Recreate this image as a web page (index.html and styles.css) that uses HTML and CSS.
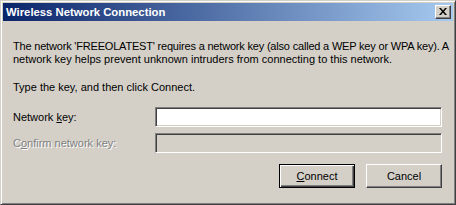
FILE: index.html
```html
<!DOCTYPE html>
<html>
<head>
<meta charset="utf-8">
<link rel="stylesheet" href="styles.css">
</head>
<body>
<div class="window">
  <div class="titlebar">
    <span class="title">Wireless Network Connection</span>
    <span class="close"><svg width="8" height="7" viewBox="0 0 8 7"><path d="M0 0h2l2 2.5 2-2.5h2l-3 3.5 3 3.5h-2l-2-2.5-2 2.5h-2l3-3.5z" fill="#000"/></svg></span>
  </div>
  <div class="content">
    <p class="msg"><span class="tight">The network 'FREEOLATEST' requires a network key (also called a WEP key or WPA key). A</span><br>network key helps prevent unknown intruders from connecting to this network.</p>
    <p class="msg instr">Type the key, and then click Connect.</p>
    <div class="form">
      <label class="lbl">Network <u>k</u>ey:</label>
      <div class="field"></div>
      <label class="lbl disabled">C<u>o</u>nfirm network key:</label>
      <div class="field off"></div>
    </div>
    <div class="actions">
      <button class="btn default"><span><u>C</u>onnect</span></button>
      <button class="btn"><span>Cancel</span></button>
    </div>
  </div>
</div>
</body>
</html>
```
FILE: styles.css
```css
html, body {
  margin: 0;
  padding: 0;
  background: #d4d0c8;
}
body {
  font-family: "Liberation Sans", Arial, sans-serif;
  font-size: 11px;
  color: #000;
}
.window {
  width: 456px;
  height: 205px;
  box-sizing: border-box;
  border: 1px solid;
  border-color: #d4d0c8 #404040 #404040 #d4d0c8;
  box-shadow: inset 1px 1px #fff, inset -1px -1px #808080;
  padding: 2px;
  background: #d4d0c8;
  display: flex;
  flex-direction: column;
}
.titlebar {
  height: 18px;
  background: linear-gradient(to right, #0a246a, #a6caf0);
  display: flex;
  align-items: center;
  justify-content: space-between;
  padding: 0 2px 0 3px;
}
.title {
  color: #fff;
  font-weight: bold;
  font-size: 11.3px;
  line-height: 13px;
}
.close {
  width: 16px;
  height: 14px;
  box-sizing: border-box;
  background: #d4d0c8;
  border: 1px solid;
  border-color: #fff #404040 #404040 #fff;
  box-shadow: inset -1px -1px #808080;
  display: flex;
  align-items: center;
  justify-content: center;
  padding: 0 1px 1px 0;
}
.close svg { display: block; }
.content {
  padding: 19px 11px 0 10px;
}
.msg {
  margin: 0;
  line-height: 13px;
  white-space: nowrap;
}
.tight {
  letter-spacing: -0.19px;
}
.instr {
  margin-top: 15px;
}
.form {
  margin-top: 13px;
  display: grid;
  grid-template-columns: 142px 287px;
  row-gap: 6px;
  align-items: center;
}
.lbl {
  line-height: 13px;
}
.lbl.disabled {
  color: #808080;
  text-shadow: 1px 1px #fff;
}
.field {
  height: 20px;
  box-sizing: border-box;
  background: #fff;
  border: 1px solid;
  border-color: #808080 #fff #fff #808080;
  box-shadow: inset 1px 1px #404040, inset -1px -1px #d4d0c8;
}
.field.off {
  background: #d4d0c8;
}
.actions {
  margin-top: 11px;
  display: flex;
  justify-content: flex-end;
  gap: 11px;
}
.btn {
  width: 76px;
  height: 24px;
  box-sizing: border-box;
  margin: 0;
  padding: 0;
  font: inherit;
  color: #000;
  background: #d4d0c8;
  border: 1px solid;
  border-color: #fff #404040 #404040 #fff;
  box-shadow: inset -1px -1px #808080;
  display: flex;
  align-items: center;
  justify-content: center;
}
.btn.default {
  border: 1px solid #000;
  box-shadow: inset 1px 1px #fff, inset -1px -1px #404040, inset -2px -2px #808080;
}
.btn span {
  line-height: 13px;
}
```
